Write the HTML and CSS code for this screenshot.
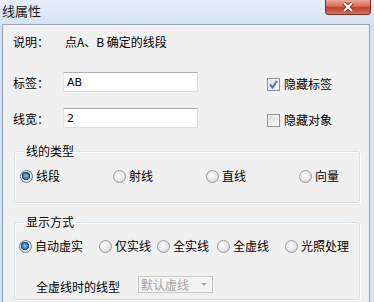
FILE: index.html
```html
<!DOCTYPE html>
<html lang="zh-CN">
<head>
  <meta charset="UTF-8" />
  <title>线属性</title>
  <link rel="stylesheet" href="styles.css">
</head>
<body>
  <div class="window">
    <div class="titlebar">
      <span class="title">线属性</span>
      <div class="close">
        <svg width="14" height="10" viewBox="0 0 14 10">
          <path d="M3 1 L11 9 M11 1 L3 9" stroke="#6b2015" stroke-width="3.6" />
          <path d="M3 1 L11 9 M11 1 L3 9" stroke="#fff" stroke-width="2.2" />
        </svg>
      </div>
    </div>

    <div class="panel">
      <div class="desc">
        <span class="label">说明：</span>
        <span class="desc-text">点A、B 确定的线段</span>
      </div>

      <div class="field-row first">
        <span class="label">标签：</span>
        <input class="textbox" type="text" value="AB">
        <label class="check">
          <span class="box checked">
            <svg width="9" height="9" viewBox="0 0 9 9">
              <path d="M1 4.5 L3.5 7.5 L8 1" fill="none" stroke="#4b6fb5" stroke-width="2" />
            </svg>
          </span>
          隐藏标签
        </label>
      </div>

      <div class="field-row">
        <span class="label">线宽：</span>
        <input class="textbox" type="text" value="2">
        <label class="check">
          <span class="box"></span>
          隐藏对象
        </label>
      </div>

      <!-- 线的类型 -->
      <fieldset class="group type-group">
        <legend>线的类型</legend>
        <div class="radios type-radios">
          <span class="radio"><span class="dot on"></span>线段</span>
          <span class="radio"><span class="dot"></span>射线</span>
          <span class="radio"><span class="dot"></span>直线</span>
          <span class="radio"><span class="dot"></span>向量</span>
        </div>
      </fieldset>

      <!-- 显示方式 -->
      <fieldset class="group show-group">
        <legend>显示方式</legend>
        <div class="radios show-radios">
          <span class="radio"><span class="dot on"></span>自动虚实</span>
          <span class="radio"><span class="dot"></span>仅实线</span>
          <span class="radio"><span class="dot"></span>全实线</span>
          <span class="radio"><span class="dot"></span>全虚线</span>
          <span class="radio"><span class="dot"></span>光照处理</span>
        </div>
        <div class="dash-row">
          <span class="dash-label">全虚线时的线型</span>
          <div class="select">
            <span>默认虚线</span>
            <span class="arrow"></span>
          </div>
        </div>
      </fieldset>
    </div>
  </div>
</body>
</html>
```

FILE: styles.css
```css
body {
  margin: 0;
  font-family: "Noto Sans CJK SC", "Liberation Sans", sans-serif;
  font-size: 12px;
  color: #000;
}

.window {
  width: 374px;
  height: 302px;
  background: #d3e1f0;
  display: flex;
  flex-direction: column;
  overflow: hidden;
}

.titlebar {
  height: 24px;
  flex: none;
  display: flex;
  align-items: flex-start;
  padding-left: 2px;
  background: linear-gradient(#e4edf8, #d6e3f1);
}

.title {
  font-size: 13px;
  line-height: 22px;
  color: #1a1a1a;
}

.close {
  margin-left: auto;
  margin-right: 3px;
  width: 44px;
  height: 14px;
  border: 1px solid #7a2f24;
  border-top: none;
  border-radius: 0 0 4px 4px;
  background: linear-gradient(#e9a99a 0%, #d56a55 45%, #c0412c 55%, #d5705b 100%);
  display: flex;
  align-items: center;
  justify-content: center;
}

.panel {
  flex: 1;
  margin: 0 4px 0 2px;
  border: 1px solid #97a3b0;
  border-bottom: none;
  background: #f0f0f0;
}

.label {
  width: 50px;
  flex: none;
}

.desc {
  display: flex;
  line-height: 18px;
  margin: 8px 0 0 10px;
}

.desc-text {
  padding-left: 2px;
}

.field-row {
  display: flex;
  align-items: center;
  margin: 16px 0 0 10px;
  height: 20px;
}

.field-row.first {
  margin-top: 21px;
}

.textbox {
  width: 135px;
  height: 20px;
  box-sizing: border-box;
  margin: 0;
  padding: 0 0 0 3px;
  border: 1px solid #dbdfe6;
  border-top-color: #abadb3;
  border-left-color: #e2e3ea;
  background: #fff;
  font-family: "DejaVu Sans", "Liberation Sans", sans-serif;
  font-size: 11px;
  color: #000;
}

.check {
  display: flex;
  align-items: center;
  gap: 4px;
  margin: 4px 0 0 69px;
  line-height: 16px;
}

.box {
  width: 11px;
  height: 11px;
  border: 1px solid #8f8f8f;
  background: linear-gradient(135deg, #dcdcdc, #fbfbfb);
  box-shadow: inset 0 0 0 1px #f4f4f4;
  display: flex;
  align-items: center;
  justify-content: center;
}

.group {
  margin: 0 9px 0 11px;
  padding: 0 0 0 4px;
  border: 1px solid #d5dfe5;
  border-radius: 3px;
  box-shadow: inset 1px 1px 0 #fff, 1px 1px 0 #fff;
}

.group legend {
  margin-left: 5px;
  padding: 0 2px;
  line-height: 16px;
}

.type-group {
  margin-top: 15px;
  padding-top: 9px;
  padding-bottom: 18px;
}

.show-group {
  margin-top: 11px;
  padding-top: 8px;
  height: 86px;
  box-sizing: border-box;
}

.radios {
  display: grid;
  line-height: 16px;
}

.type-radios {
  grid-template-columns: 93px 93px 93px 1fr;
  padding-left: 1px;
}

.show-radios {
  grid-template-columns: 80px 58px 60px 68px 1fr;
}

.radio {
  display: flex;
  align-items: center;
  gap: 3px;
  white-space: nowrap;
}

.dot {
  width: 11px;
  height: 11px;
  flex: none;
  border: 1px solid #9b9b9b;
  border-radius: 50%;
  background: radial-gradient(circle at 40% 40%, #ffffff 0%, #e6e6e6 55%, #c9c9c9 100%);
}

.dot.on {
  border-color: #6a7f93;
  background: radial-gradient(circle at 45% 45%, #8fcaf0 0%, #2f6f9f 35%, #17405f 48%, #dfe8ee 52%, #c8d2da 100%);
}

.dash-row {
  display: flex;
  align-items: center;
  margin-top: 20px;
  padding-left: 17px;
}

.dash-label {
  width: 102px;
  flex: none;
  padding-top: 4px;
}

.select {
  width: 71px;
  height: 15px;
  border: 1px solid #c9c9c9;
  background: #f4f4f4;
  display: flex;
  align-items: center;
  padding-left: 2px;
  color: #a3a3a3;
  line-height: 15px;
}

.arrow {
  margin-left: auto;
  margin-right: 5px;
  width: 0;
  height: 0;
  border-left: 3px solid transparent;
  border-right: 3px solid transparent;
  border-top: 3px solid #a8a8a8;
}
```
